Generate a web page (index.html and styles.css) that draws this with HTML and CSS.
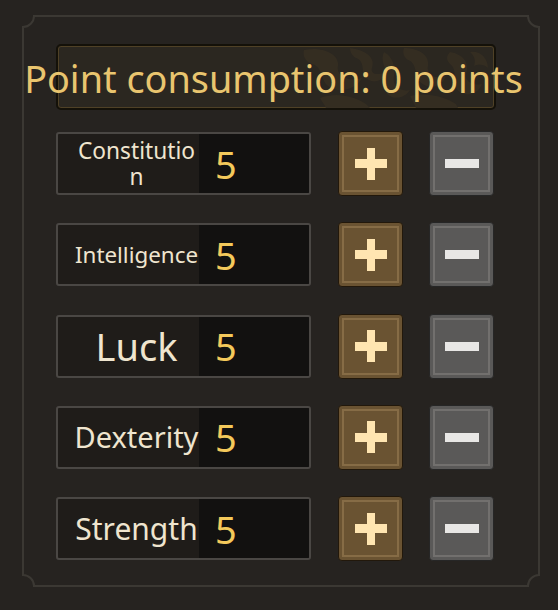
FILE: index.html
```html
<!DOCTYPE html>
<html>
<head>
<meta charset="utf-8">
<link rel="stylesheet" href="styles.css">
</head>
<body>
<div class="frame">
  <svg class="frame-line" width="518" height="572" viewBox="0 0 518 572">
    <path d="M12 1 H506 A11 11 0 0 0 517 12 V560 A11 11 0 0 0 506 571 H12 A11 11 0 0 0 1 560 V12 A11 11 0 0 0 12 1 Z" fill="none" stroke="#3b3833" stroke-width="2"/>
  </svg>
  <div class="title-box">
    <svg class="title-deco" width="190" height="62" viewBox="0 0 190 62">
      <g fill="#352e22">
        <path d="M4 4 C22 0 40 8 38 20 C36 30 48 36 62 32 C56 44 38 48 28 40 C20 34 24 22 12 18 C6 16 2 10 4 4 Z"/>
        <path d="M50 2 C66 4 76 12 72 22 C70 28 78 30 86 26 C84 36 72 38 66 32 C60 26 66 16 56 12 C52 10 50 6 50 2 Z"/>
        <path d="M84 6 C92 10 96 20 94 30 C92 40 100 46 110 44 C104 54 90 54 86 46 C82 38 88 28 84 20 C82 14 82 10 84 6 Z"/>
        <path d="M104 2 C120 2 130 10 128 20 C126 28 136 34 146 30 C142 42 128 44 120 36 C114 30 118 18 108 14 C104 12 102 6 104 2 Z"/>
        <path d="M150 6 C164 8 170 18 166 28 C164 34 172 40 182 38 C178 50 162 52 156 42 C152 34 158 24 150 18 C146 14 146 10 150 6 Z"/>
        <path d="M20 52 C36 46 54 50 66 58 L70 62 L26 62 C24 58 22 56 20 52 Z"/>
        <path d="M110 50 C126 46 144 50 156 58 L158 62 L116 62 C114 58 112 54 110 50 Z"/>
        <path d="M170 6 C180 4 188 12 188 22 C184 18 178 18 174 20 C176 14 174 10 170 6 Z"/>
      </g>
    </svg>
    <span class="title-text">Point consumption: 0 points</span>
  </div>
  <div class="rows">
    <div class="row">
      <div class="stat">
        <div class="stat-label"><span class="fs-s">Constitution</span></div>
        <div class="stat-value">5</div>
      </div>
      <button class="btn btn-plus"><span class="plus"></span></button>
      <button class="btn btn-minus"><span class="minus"></span></button>
    </div>
    <div class="row">
      <div class="stat">
        <div class="stat-label"><span class="fs-s nowrap">Intelligence</span></div>
        <div class="stat-value">5</div>
      </div>
      <button class="btn btn-plus"><span class="plus"></span></button>
      <button class="btn btn-minus"><span class="minus"></span></button>
    </div>
    <div class="row">
      <div class="stat">
        <div class="stat-label"><span class="fs-l">Luck</span></div>
        <div class="stat-value">5</div>
      </div>
      <button class="btn btn-plus"><span class="plus"></span></button>
      <button class="btn btn-minus"><span class="minus"></span></button>
    </div>
    <div class="row">
      <div class="stat">
        <div class="stat-label"><span class="fs-m">Dexterity</span></div>
        <div class="stat-value">5</div>
      </div>
      <button class="btn btn-plus"><span class="plus"></span></button>
      <button class="btn btn-minus"><span class="minus"></span></button>
    </div>
    <div class="row">
      <div class="stat">
        <div class="stat-label"><span class="fs-m2">Strength</span></div>
        <div class="stat-value">5</div>
      </div>
      <button class="btn btn-plus"><span class="plus"></span></button>
      <button class="btn btn-minus"><span class="minus"></span></button>
    </div>
  </div>
</div>
</body>
</html>
```
FILE: styles.css
```css
html, body {
  margin: 0;
  padding: 0;
}
body {
  width: 558px;
  height: 610px;
  background: #262320;
  font-family: "Noto Sans", "Open Sans", sans-serif;
  overflow: hidden;
}
.frame {
  position: relative;
  box-sizing: border-box;
  width: 518px;
  height: 572px;
  margin: 15px 0 0 22px;
  padding: 29px 0 0 34px;
}
.frame-line {
  position: absolute;
  left: 0;
  top: 0;
  pointer-events: none;
}
.title-box {
  position: relative;
  box-sizing: border-box;
  width: 440px;
  height: 66px;
  border: 2px solid #141109;
  border-radius: 5px;
  box-shadow: inset 0 0 0 1px #4f4126;
  background: #2b2720;
  display: flex;
  justify-content: center;
  align-items: center;
  padding-top: 3px;
}
.title-deco {
  position: absolute;
  right: 4px;
  top: 0;
  opacity: 0.9;
}
.title-text {
  position: relative;
  white-space: nowrap;
  font-size: 37.8px;
  line-height: 38px;
  color: #e9c56f;
  margin-left: -5px;
}
.rows {
  display: flex;
  flex-direction: column;
  gap: 26.3px;
  margin-top: 21px;
}
.row {
  display: flex;
  align-items: center;
  height: 65px;
}
.stat {
  box-sizing: border-box;
  width: 255px;
  height: 63px;
  border: 2px solid #4a4744;
  border-radius: 3px;
  display: flex;
  overflow: hidden;
  background: #1f1c19;
}
.stat-label {
  box-sizing: border-box;
  width: 141px;
  padding-left: 16px;
  display: flex;
  align-items: center;
  justify-content: center;
  text-align: center;
  color: #efe5cf;
}
.stat-label span {
  display: block;
  width: 124px;
  word-break: break-all;
}
.stat-label .nowrap {
  white-space: nowrap;
  word-break: normal;
  font-size: 22.4px;
}
.fs-s { font-size: 22.7px; line-height: 26px; }
.fs-m { font-size: 29px; line-height: 34px; }
.fs-m2 { font-size: 30px; line-height: 34px; }
.fs-l { font-size: 38px; line-height: 44px; }
.stat-value {
  flex: 1;
  background: #121110;
  color: #f4c95b;
  font-size: 38px;
  line-height: 44px;
  padding-left: 16px;
  display: flex;
  align-items: center;
}
.btn {
  box-sizing: border-box;
  width: 65px;
  height: 65px;
  border-radius: 4px;
  padding: 0;
  display: flex;
  align-items: center;
  justify-content: center;
  position: relative;
}
.btn-plus {
  margin-left: 27px;
  border: 1px solid #22180b;
  background: #6a5332;
  box-shadow: inset 0 0 0 3px #6a5332, inset 0 0 0 5px #866c46;
}
.btn-minus {
  margin-left: 26px;
  border: 1px solid #262626;
  background: #5a5958;
  box-shadow: inset 0 0 0 3px #5a5958, inset 0 0 0 5px #72706e;
}
.plus {
  position: relative;
  width: 32px;
  height: 32px;
}
.plus::before,
.plus::after {
  content: "";
  position: absolute;
  background: #ffe5b1;
}
.plus::before {
  left: 0;
  top: 11.5px;
  width: 32px;
  height: 9px;
}
.plus::after {
  left: 12px;
  top: 0;
  width: 8px;
  height: 32px;
}
.minus {
  width: 34px;
  height: 9px;
  background: #e8e7e5;
}
```
